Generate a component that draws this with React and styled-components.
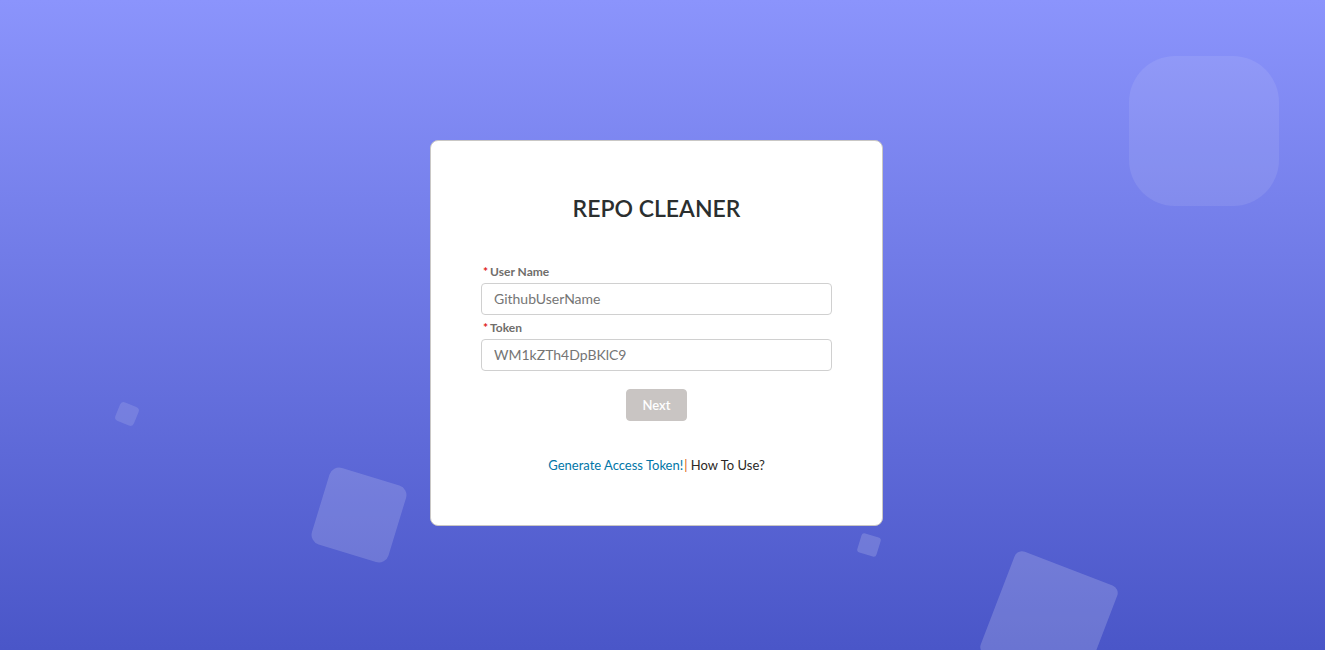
import React from "react";
import styled, { createGlobalStyle } from "styled-components";

const GlobalStyle = createGlobalStyle`
  *, *::before, *::after { box-sizing: border-box; }
  body {
    margin: 0;
    font-family: Lato, "Liberation Sans", sans-serif;
    font-size: 13px;
    color: #2b2f2f;
  }
`;

const Page = styled.main`
  position: relative;
  overflow: hidden;
  min-height: 100vh;
  display: flex;
  align-items: center;
  justify-content: center;
  padding: 16px 12px 0 0;
  background: linear-gradient(to bottom, #8b94fc, #4a56c8);
`;

const Square = styled.span`
  position: absolute;
  left: ${(p) => p.$x}px;
  top: ${(p) => p.$y}px;
  width: ${(p) => p.$size}px;
  height: ${(p) => p.$size}px;
  border-radius: ${(p) => p.$radius}px;
  transform: rotate(${(p) => p.$turn}deg);
  background: rgba(255, 255, 255, ${(p) => p.$alpha});
`;

const Card = styled.form`
  position: relative;
  width: 100%;
  max-width: 453px;
  padding: 50px;
  display: flex;
  flex-direction: column;
  background: #fff;
  border: 1px solid #c9c7c5;
  border-radius: 8px;
`;

const Title = styled.h1`
  margin: 0 0 34px;
  font-size: 23px;
  line-height: 34px;
  font-weight: 600;
  text-align: center;
`;

const Field = styled.div`
  display: flex;
  flex-direction: column;
  gap: 2px;
  margin-top: 4px;
`;

const Label = styled.label`
  padding-left: 2px;
  font-size: 12px;
  line-height: 18px;
  font-weight: 700;
  color: #706e6b;
`;

const Required = styled.abbr`
  margin-right: 2px;
  color: #e02020;
`;

const Input = styled.input`
  width: 100%;
  height: 32px;
  padding: 0 12px 2px;
  border: 1px solid #d0d0d0;
  border-radius: 4px;
  background: #fff;
  font-family: inherit;
  font-size: 14px;
  color: #2b2f2f;
  &::placeholder { color: #757575; opacity: 1; }
`;

const NextButton = styled.button`
  align-self: center;
  height: 32px;
  margin-top: 18px;
  padding: 0 16px;
  border: 1px solid #c9c5c3;
  border-radius: 4px;
  background: #c9c5c3;
  color: #fff;
  font-family: inherit;
  font-size: 13px;
  font-weight: 600;
`;

const Links = styled.p`
  margin: 34px 0 0;
  line-height: 20px;
  text-align: center;
`;

const Link = styled.a`
  color: ${(p) => (p.$plain ? "#2b2826" : "#0176a8")};
  text-decoration: none;
`;

const Divider = styled.span`
  margin-left: 1px;
  color: #dc5a10;
`;

const squares = [
  { x: 319, y: 475, size: 80, radius: 10, turn: 17, alpha: 0.16 },
  { x: 117, y: 404, size: 20, radius: 4, turn: 22, alpha: 0.13 },
  { x: 859, y: 535, size: 20, radius: 3, turn: 17, alpha: 0.17 },
  { x: 994, y: 565, size: 110, radius: 8, turn: 21, alpha: 0.18 },
  { x: 1129, y: 56, size: 150, radius: 46, turn: 0, alpha: 0.09 },
];

export default function App() {
  return (
    <>
      <GlobalStyle />
      <Page>
        {squares.map((s) => (
          <Square
            key={s.x}
            aria-hidden="true"
            $x={s.x}
            $y={s.y}
            $size={s.size}
            $radius={s.radius}
            $turn={s.turn}
            $alpha={s.alpha}
          />
        ))}
        <Card>
          <Title>REPO CLEANER</Title>
          <Field>
            <Label htmlFor="username">
              <Required>*</Required>User Name
            </Label>
            <Input id="username" type="text" placeholder="GithubUserName" required />
          </Field>
          <Field>
            <Label htmlFor="token">
              <Required>*</Required>Token
            </Label>
            <Input id="token" type="text" placeholder="WM1kZTh4DpBKlC9" required />
          </Field>
          <NextButton type="submit" disabled>Next</NextButton>
          <Links>
            <Link href="#token">Generate Access Token!</Link>
            <Divider>|</Divider> <Link href="#help" $plain>How To Use?</Link>
          </Links>
        </Card>
      </Page>
    </>
  );
}
